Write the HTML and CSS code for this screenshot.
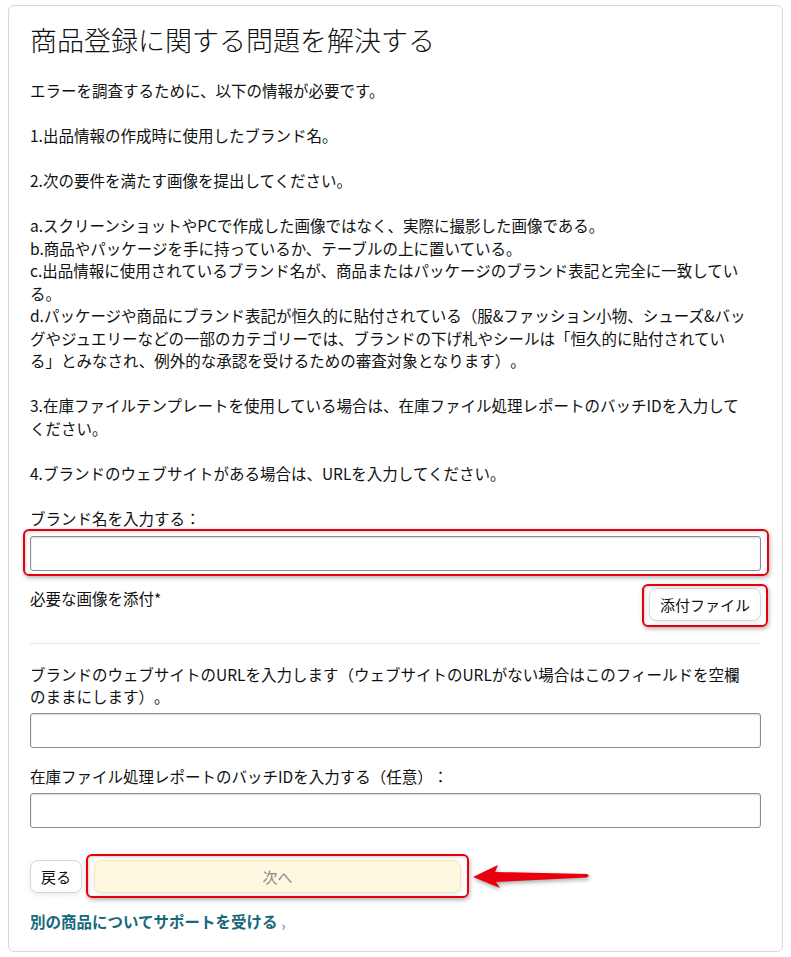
FILE: index.html
```html
<!DOCTYPE html>
<html lang="ja">
<head>
  <meta charset="utf-8">
  <meta name="viewport" content="width=device-width, initial-scale=1.0">
  <title>商品登録に関する問題を解決する</title>
  <link rel="stylesheet" href="styles.css">
</head>

<body>
  <div class="card">
    <h1 class="title">商品登録に関する問題を解決する</h1>

    <p class="intro">
      エラーを調査するために、以下の情報が必要です。<br><br>
      1.出品情報の作成時に使用したブランド名。<br><br>
      2.次の要件を満たす画像を提出してください。<br><br>
      a.スクリーンショットやPCで作成した画像ではなく、実際に撮影した画像である。<br>
      b.商品やパッケージを手に持っているか、テーブルの上に置いている。<br>
      c.出品情報に使用されているブランド名が、商品またはパッケージのブランド表記と完全に一致してい<br>る。<br>
      d.パッケージや商品にブランド表記が恒久的に貼付されている（服&amp;ファッション小物、シューズ&amp;バッ<br>グやジュエリーなどの一部のカテゴリーでは、ブランドの下げ札やシールは「恒久的に貼付されてい<br>る」とみなされ、例外的な承認を受けるための審査対象となります）。<br><br>
      3.在庫ファイルテンプレートを使用している場合は、在庫ファイル処理レポートのバッチIDを入力して<br>ください。<br><br>
      4.ブランドのウェブサイトがある場合は、URLを入力してください。
    </p>

    <div class="field field-first">
      <label class="field-label" for="brand">ブランド名を入力する：</label>
      <div class="mark mark-input">
        <input class="text-input" id="brand" type="text">
      </div>
    </div>

    <div class="attach-row">
      <span>必要な画像を添付*</span>
      <span class="mark mark-btn"><button class="btn btn-attach" type="button">添付ファイル</button></span>
    </div>

    <hr class="divider">

    <div class="field field-url">
      <label class="field-label" for="url">ブランドのウェブサイトのURLを入力します（ウェブサイトのURLがない場合はこのフィールドを空欄<br>のままにします）。</label>
      <input class="text-input" id="url" type="text">
    </div>

    <div class="field field-batch">
      <label class="field-label" for="batch">在庫ファイル処理レポートのバッチIDを入力する（任意）：</label>
      <input class="text-input" id="batch" type="text">
    </div>

    <div class="actions">
      <button class="btn btn-back" type="button">戻る</button>
      <span class="mark mark-next"><button class="btn btn-next" type="button">次へ</button></span>
      <svg class="arrow" width="120" height="30" viewBox="0 0 120 30">
        <polygon points="1,15 26,3 23,10 115,12 117,13.5 115,15.5 24,20 28,26" fill="#e8000d"/>
      </svg>
    </div>

    <a class="help-link" href="#">別の商品についてサポートを受ける<span class="chev">›</span></a>
  </div>
</body>
</html>
```

FILE: styles.css
```css
:root {
  font-family: "Noto Sans CJK JP", "Noto Sans", sans-serif;
  font-size: 15.5px;
  color: #0f1111;
  text-spacing-trim: space-all;
}

body {
  margin: 0;
  padding: 0;
  background: #fff;
}

.card {
  margin: 5px 8px 0;
  padding: 16px 21px 17px;
  border: 1px solid #d5d9d9;
  border-radius: 6px;
  background: #fff;
}

.title {
  margin: 0 0 21px;
  font-size: 27px;
  line-height: 36px;
  font-weight: 300;
}

.intro {
  margin: 0;
  line-height: 22.5px;
}

.field-label {
  display: block;
  line-height: 22px;
  margin-bottom: 6px;
}

.field-first {
  margin-top: 23px;
}

.field-first .field-label {
  margin-bottom: 7px;
}

.field-url {
  margin-top: 19px;
}

.field-batch {
  margin-top: 17px;
}

.text-input {
  display: block;
  width: 100%;
  height: 35px;
  box-sizing: border-box;
  border: 1px solid #888c8c;
  border-radius: 3px;
  box-shadow: inset 0 1px 2px rgba(15, 17, 17, 0.15);
  background: #fff;
}

.attach-row {
  display: flex;
  justify-content: space-between;
  align-items: flex-start;
  margin-top: 16px;
  line-height: 22px;
}

.attach-row .mark {
  margin-top: 1px;
}

.divider {
  margin: 22px 0 0;
  border: 0;
  border-top: 1px solid #e3e6e6;
}

/* buttons */
.btn {
  display: block;
  height: 33px;
  padding: 0 10px;
  font-family: inherit;
  font-size: 15px;
  color: #0f1111;
  background: #fff;
  border: 1px solid #d5d9d9;
  border-radius: 8px;
  box-shadow: 0 2px 5px rgba(213, 217, 217, 0.5);
}

.btn-next {
  width: 367px;
  color: #8a8a8a;
  background: #fdf8df;
  border-color: #f3e7b3;
}

.actions {
  position: relative;
  display: flex;
  gap: 12px;
  margin-top: 32px;
}

/* red annotation boxes */
.mark {
  position: relative;
  display: block;
}

.mark::after {
  content: "";
  position: absolute;
  border: 2px solid #e4000c;
  border-radius: 6px;
  box-shadow: 1px 2px 4px rgba(0, 0, 0, 0.3), inset 1px 1px 3px rgba(0, 0, 0, 0.18);
  pointer-events: none;
}

.mark-input::after {
  inset: -7px -8px -5px -7px;
}

.mark-btn::after {
  inset: -4px -7px -6px -7px;
}

.mark-next::after {
  inset: -6px -8px -5px -8px;
}

.arrow {
  position: absolute;
  left: 442px;
  top: 2px;
  filter: drop-shadow(1px 2px 2px rgba(0, 0, 0, 0.35));
}

.help-link {
  display: block;
  margin-top: 17px;
  line-height: 22px;
  font-weight: bold;
  color: #16697a;
  text-decoration: none;
}

.chev {
  position: relative;
  top: 3px;
  margin-left: 4px;
  font-size: 13px;
  font-weight: normal;
  color: #4c7a85;
}
```
